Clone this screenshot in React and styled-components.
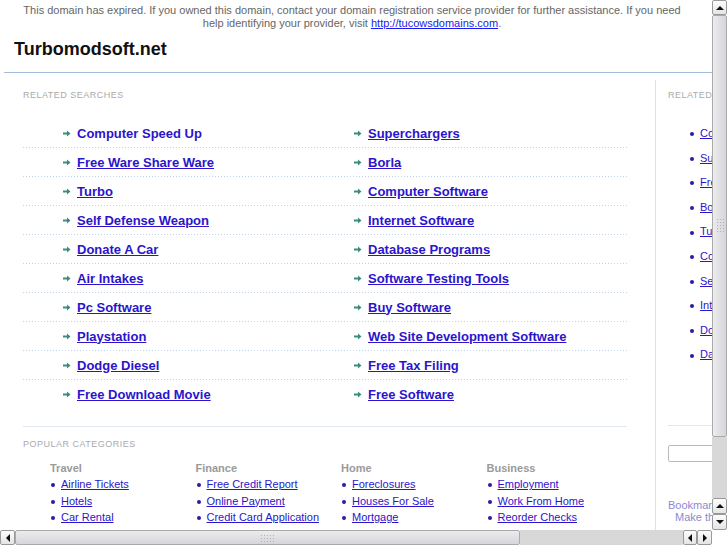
import React from 'react';
import styled, { createGlobalStyle } from 'styled-components';

const GlobalStyle = createGlobalStyle`
  html, body {
    margin: 0;
    padding: 0;
    background: #fff;
    overflow: hidden;
  }
  body {
    font-family: "Liberation Sans", Arial, sans-serif;
  }
`;

const LINK = '#2b14cc';

const Window = styled.div`
  width: 727px;
  height: 545px;
  display: flex;
  flex-direction: column;
  overflow: hidden;
`;
const MainRow = styled.div`
  display: flex;
  height: 530px;
`;
const BottomRow = styled.div`
  display: flex;
  height: 15px;
`;
const Viewport = styled.div`
  width: 712px;
  height: 530px;
  overflow: hidden;
`;
const Page = styled.div`
  width: 900px;
  padding-left: 4px;
`;

const Header = styled.header`
  border-bottom: 1px solid #a3bcdd;
  padding: 4px 0 12px 0;
`;
const Notice = styled.p`
  margin: 0 0 0 13px;
  width: 670px;
  text-align: center;
  font-size: 11px;
  line-height: 13px;
  color: #666;
  a { color: #1a1aee; }
`;
const Title = styled.h1`
  margin: 8px 0 0 10px;
  font-size: 18px;
  line-height: 22px;
  font-weight: bold;
  color: #111;
`;

const Columns = styled.div`
  display: flex;
  margin-top: 7px;
`;
const LeftPanel = styled.section`
  width: 604px;
  flex-shrink: 0;
  padding: 10px 28px 0 19px;
  border-right: 1px solid #d6e2f1;
  height: 460px;
`;
const RightPanel = styled.aside`
  width: 220px;
  flex-shrink: 0;
  padding: 10px 0 0 12px;
`;
const Label = styled.div`
  font-size: 9px;
  line-height: 11px;
  letter-spacing: 0.5px;
  color: #aaa;
  text-transform: uppercase;
  white-space: nowrap;
  margin-top: ${(p) => p.$top || 0}px;
`;

const SearchList = styled.div`
  margin-top: 18px;
  padding-bottom: 17px;
  border-bottom: 1px solid #dfe8f2;
`;
const SearchRow = styled.div`
  position: relative;
  display: grid;
  grid-template-columns: 302px 302px;
  height: 29px;
  &::after {
    content: '';
    position: absolute;
    left: 0;
    right: 0;
    bottom: 0;
    height: 1px;
    background: repeating-linear-gradient(90deg, #bdd2ec 0 1px, transparent 1px 3px);
  }
  &:last-child::after { display: none; }
`;
const SearchCell = styled.div`
  display: flex;
  align-items: center;
  gap: 6px;
  padding-left: ${(p) => p.$indent}px;
  padding-bottom: 1px;
`;
const SearchLink = styled.a`
  font-size: 13px;
  font-weight: bold;
  color: ${LINK};
  text-decoration: ${(p) => (p.$plain ? 'none' : 'underline')};
  cursor: pointer;
`;

const CatGrid = styled.div`
  display: grid;
  grid-template-columns: repeat(4, 145.5px);
  padding-left: 27px;
  margin-top: 12px;
`;
const CatHead = styled.div`
  font-size: 11px;
  line-height: 13px;
  font-weight: bold;
  color: #9a9a9a;
  margin-bottom: 1px;
`;
const BulletList = styled.ul`
  list-style: none;
  margin: ${(p) => p.$top || 0}px 0 0 0;
  padding: 0 0 0 ${(p) => p.$indent || 0}px;
`;
const BulletItem = styled.li`
  position: relative;
  font-size: 11px;
  line-height: ${(p) => p.$lh}px;
  padding-left: 11px;
  white-space: nowrap;
  &::before {
    content: '';
    position: absolute;
    left: 1px;
    top: 50%;
    width: 4px;
    height: 4px;
    margin-top: -1px;
    border-radius: 50%;
    background: #2a1aa8;
  }
  a {
    color: ${LINK};
    text-decoration: underline;
    cursor: pointer;
  }
`;

const SideRule = styled.div`
  border-top: 1px solid #dfe8f2;
  margin-top: 58px;
`;
const SearchInput = styled.input`
  display: block;
  margin-top: 19px;
  width: 150px;
  height: 17px;
  box-sizing: border-box;
  border: 1px solid #bbb;
  border-radius: 2px;
`;
const SideNote = styled.div`
  margin-top: ${(p) => p.$top || 0}px;
  padding-left: ${(p) => p.$indent || 0}px;
  font-size: 11px;
  line-height: 12px;
  color: #8a8ad4;
  white-space: nowrap;
`;

/* scrollbars */
const VBar = styled.div`
  width: 15px;
  height: 530px;
  display: flex;
  flex-direction: column;
`;
const HBar = styled.div`
  width: 712px;
  height: 15px;
  display: flex;
`;
const Corner = styled.div`
  width: 15px;
  height: 15px;
  background: #fff;
`;
const Track = styled.div`
  flex: 1;
  background-color: #f3f3f3;
  background-image: radial-gradient(#d6d6d6 0.7px, transparent 0.8px);
  background-size: 2px 2px;
`;
const Thumb = styled.div`
  box-sizing: border-box;
  ${(p) => (p.$horizontal ? `width: ${p.$size}px; height: 15px;` : `height: ${p.$size}px; width: 15px;`)}
  border: 1px solid #aaa;
  border-radius: 2px;
  background: ${(p) =>
    p.$horizontal
      ? 'linear-gradient(#ececef, #d6d6da)'
      : 'linear-gradient(90deg, #ececef, #d6d6da)'};
  display: flex;
  align-items: center;
  justify-content: center;
`;
const Grip = styled.span`
  width: ${(p) => (p.$horizontal ? 16 : 8)}px;
  height: ${(p) => (p.$horizontal ? 8 : 16)}px;
  background-image: radial-gradient(#b0b0b0 0.7px, transparent 0.9px);
  background-size: 3px 3px;
`;
const ArrowButton = styled.div`
  box-sizing: border-box;
  width: ${(p) => p.$w || 15}px;
  height: ${(p) => p.$h || 15}px;
  border: 1px solid #999;
  border-radius: 2px;
  background: linear-gradient(#fdfdfd, #e4e4e4);
  display: flex;
  align-items: center;
  justify-content: center;
  &::after {
    content: '';
    width: 0;
    height: 0;
    ${(p) =>
      p.$dir === 'up'
        ? 'border-left: 4px solid transparent; border-right: 4px solid transparent; border-bottom: 4px solid #111;'
        : p.$dir === 'down'
        ? 'border-left: 4px solid transparent; border-right: 4px solid transparent; border-top: 4px solid #111;'
        : p.$dir === 'left'
        ? 'border-top: 4px solid transparent; border-bottom: 4px solid transparent; border-right: 4px solid #111;'
        : 'border-top: 4px solid transparent; border-bottom: 4px solid transparent; border-left: 4px solid #111;'}
  }
`;

const Arrow = () => (
  <svg width="8" height="7" viewBox="0 0 8 7">
    <path d="M0 2.5h4V0.5l3.5 3-3.5 3V4.5H0z" fill="#3b8c7e" />
  </svg>
);

const searches = [
  ['Computer Speed Up', 'Superchargers'],
  ['Free Ware Share Ware', 'Borla'],
  ['Turbo', 'Computer Software'],
  ['Self Defense Weapon', 'Internet Software'],
  ['Donate A Car', 'Database Programs'],
  ['Air Intakes', 'Software Testing Tools'],
  ['Pc Software', 'Buy Software'],
  ['Playstation', 'Web Site Development Software'],
  ['Dodge Diesel', 'Free Tax Filing'],
  ['Free Download Movie', 'Free Software'],
];

const categories = [
  { title: 'Travel', items: ['Airline Tickets', 'Hotels', 'Car Rental'] },
  { title: 'Finance', items: ['Free Credit Report', 'Online Payment', 'Credit Card Application'] },
  { title: 'Home', items: ['Foreclosures', 'Houses For Sale', 'Mortgage'] },
  { title: 'Business', items: ['Employment', 'Work From Home', 'Reorder Checks'] },
];

const sideItems = [
  'Computer Speed Up',
  'Superchargers',
  'Free Ware Share Ware',
  'Borla',
  'Turbo',
  'Computer Software',
  'Self Defense Weapon',
  'Internet Software',
  'Donate A Car',
  'Database Programs',
];

export default function App() {
  return (
    <>
      <GlobalStyle />
      <Window>
        <MainRow>
          <Viewport>
            <Page>
              <Header>
                <Notice>
                  This domain has expired. If you owned this domain, contact your domain registration
                  service provider for further assistance. If you need help identifying your provider,
                  visit <a href="#">http://tucowsdomains.com</a>.
                </Notice>
                <Title>Turbomodsoft.net</Title>
              </Header>
              <Columns>
                <LeftPanel>
                  <Label>Related Searches</Label>
                  <SearchList>
                    {searches.map(([a, b], i) => (
                      <SearchRow key={a}>
                        <SearchCell $indent={40}>
                          <Arrow />
                          <SearchLink $plain={i === 0}>{a}</SearchLink>
                        </SearchCell>
                        <SearchCell $indent={29}>
                          <Arrow />
                          <SearchLink>{b}</SearchLink>
                        </SearchCell>
                      </SearchRow>
                    ))}
                  </SearchList>
                  <Label $top={12}>Popular Categories</Label>
                  <CatGrid>
                    {categories.map((c) => (
                      <div key={c.title}>
                        <CatHead>{c.title}</CatHead>
                        <BulletList>
                          {c.items.map((it) => (
                            <BulletItem key={it} $lh={16.5}>
                              <a>{it}</a>
                            </BulletItem>
                          ))}
                        </BulletList>
                      </div>
                    ))}
                  </CatGrid>
                </LeftPanel>
                <RightPanel>
                  <Label>Related Searches</Label>
                  <BulletList $top={20} $indent={21}>
                    {sideItems.map((it) => (
                      <BulletItem key={it} $lh={24.6}>
                        <a>{it}</a>
                      </BulletItem>
                    ))}
                  </BulletList>
                  <SideRule />
                  <SearchInput type="text" />
                  <SideNote $top={37}>Bookmark this page</SideNote>
                  <SideNote $indent={7}>Make this your homepage</SideNote>
                </RightPanel>
              </Columns>
            </Page>
          </Viewport>
          <VBar>
            <ArrowButton $dir="up" />
            <Thumb $size={422}>
              <Grip />
            </Thumb>
            <Track />
            <ArrowButton $dir="up" $h={16} />
            <ArrowButton $dir="down" $h={16} />
          </VBar>
        </MainRow>
        <BottomRow>
          <HBar>
            <ArrowButton $dir="left" />
            <Thumb $horizontal $size={505}>
              <Grip $horizontal />
            </Thumb>
            <Track />
            <ArrowButton $dir="left" $w={14} />
            <ArrowButton $dir="right" />
          </HBar>
          <Corner />
        </BottomRow>
      </Window>
    </>
  );
}
